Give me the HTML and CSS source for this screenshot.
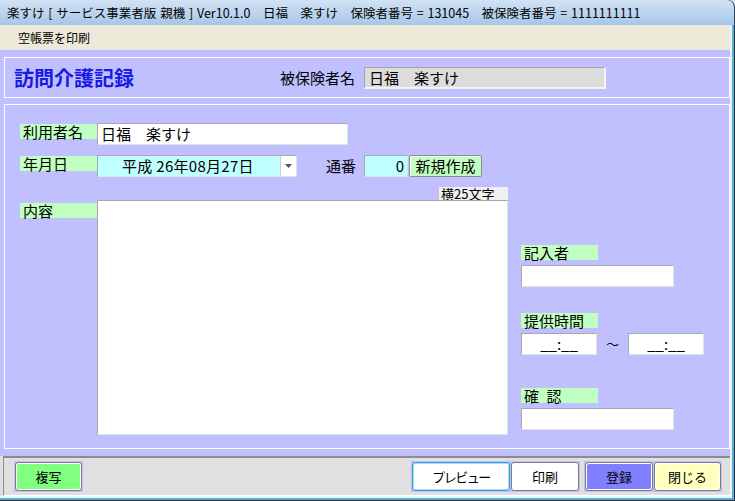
FILE: index.html
```html
<!DOCTYPE html>
<html lang="ja">
<head>
<meta charset="utf-8">
<title>訪問介護記録</title>
<link rel="stylesheet" href="styles.css">
</head>
<body>
<div class="titlebar">楽すけ [ サービス事業者版 親機 ] Ver10.1.0　日福　楽すけ　保険者番号 = 131045　被保険者番号 = 1111111111</div>
<div class="frame">
  <div class="menubar"><span class="menu-item">空帳票を印刷</span></div>
  <div class="main">
    <div class="panel header">
      <div class="page-title">訪問介護記録</div>
      <div class="hdr-label">被保険者名</div>
      <div class="hdr-field">日福　楽すけ</div>
    </div>
    <div class="panel form">
      <div class="col-left">
        <div class="row r1">
          <div class="lbl">利用者名</div>
          <div class="field name">日福　楽すけ</div>
        </div>
        <div class="row r2">
          <div class="lbl">年月日</div>
          <div class="date">
            <div class="date-text">平成 26年08月27日</div>
            <div class="dd"><svg width="7" height="4" viewBox="0 0 7 4"><path d="M0 0H7L3.5 4Z" fill="#4c5670"/></svg></div>
          </div>
          <div class="tsuban">通番</div>
          <div class="field serial">0</div>
          <div class="btn-new">新規作成</div>
        </div>
        <div class="row r3"><div class="hint">横25文字</div></div>
        <div class="row r4">
          <div class="lbl lbl-memo">内容</div>
          <div class="memo"></div>
        </div>
      </div>
      <div class="col-right">
        <div class="lbl rlbl">記入者</div>
        <div class="field rfield"></div>
        <div class="lbl rlbl gap-time">提供時間</div>
        <div class="time-row">
          <div class="field time">__:__</div>
          <div class="tilde">～</div>
          <div class="field time">__:__</div>
        </div>
        <div class="lbl rlbl gap-check">確&ensp;認</div>
        <div class="field rfield"></div>
      </div>
    </div>
  </div>
  <div class="footer">
    <div class="bgroup">
      <div class="btn btn-copy">複写</div>
    </div>
    <div class="right-buttons">
      <div class="bgroup">
        <div class="btn btn-preview">プレビュー</div>
        <div class="btn btn-print">印刷</div>
      </div>
      <div class="bgroup">
        <div class="btn btn-save">登録</div>
        <div class="btn btn-close">閉じる</div>
      </div>
    </div>
  </div>
</div>
</body>
</html>
```
FILE: styles.css
```css
* { box-sizing: border-box; }
html, body { margin: 0; padding: 0; }
body {
  width: 735px;
  height: 501px;
  overflow: hidden;
  font-family: "Noto Sans CJK JP", "DejaVu Sans", sans-serif;
  color: #000;
  background: #e0e0e0;
}
.titlebar {
  height: 25px;
  padding-left: 7px;
  font-size: 12.5px;
  line-height: 25px;
  white-space: nowrap;
  word-spacing: 1px;
  background: linear-gradient(#d2e2f4, #a8c6e8);
  border-top-right-radius: 7px;
  box-shadow: inset -1px 0 0 #33475c;
}
.frame {
  height: 476px;
  padding: 0 5px 5px 0;
  display: flex;
  flex-direction: column;
  background: #e0e0e0;
  box-shadow: inset -1px -1px 0 #22323f, inset -3px -3px 0 #55aee0, inset -5px -5px 0 #eaf4fb;
}
.menubar {
  height: 25px;
  background: #ece9d8;
  font-size: 12px;
  line-height: 25px;
  padding-left: 18px;
}
.main {
  height: 406px;
  background: #c0c0ff;
  padding: 7px 0 7px 4px;
}
.panel { border: 1px solid #fff; }
.header {
  height: 41px;
  display: flex;
  align-items: center;
  padding-left: 9px;
}
.page-title {
  width: 266px;
  font-size: 20px;
  font-weight: bold;
  color: #1a1ae6;
  line-height: 24px;
}
.hdr-label {
  width: 84px;
  font-size: 15px;
  line-height: 20px;
}
.hdr-field {
  width: 242px;
  height: 22px;
  background: #dcdcdc;
  border-style: solid;
  border-width: 1px 2px 2px 1px;
  border-color: #a4a4a4 #f4f4f4 #f4f4f4 #a4a4a4;
  font-size: 15px;
  line-height: 19px;
  padding-left: 4px;
}
.form {
  margin-top: 6px;
  height: 345px;
  display: flex;
  padding: 18px 0 0 15px;
}
.col-left {
  width: 488px;
  display: flex;
  flex-direction: column;
}
.row { display: flex; align-items: flex-start; }
.lbl {
  width: 77px;
  height: 15px;
  background: #c0ffc0;
  font-size: 15px;
  line-height: 15px;
  padding-left: 3px;
  margin-top: 1px;
  white-space: nowrap;
}
.field {
  height: 22px;
  background: #fff;
  border: 1px solid;
  border-color: #a8a8a8 #e2e2e2 #e2e2e2 #a8a8a8;
  font-size: 15px;
  line-height: 20px;
  padding-left: 3px;
  white-space: nowrap;
}
.name { width: 251px; }
.r2 { margin-top: 10px; }
.date {
  width: 200px;
  height: 22px;
  display: flex;
  border: 1px solid;
  border-color: #a8a8a8 #e2e2e2 #e2e2e2 #a8a8a8;
}
.date-text {
  flex: 1;
  background: #c0ffff;
  font-size: 15px;
  line-height: 20px;
  padding-left: 24px;
  white-space: nowrap;
  letter-spacing: 0.3px;
}
.dd {
  width: 16px;
  background: #fff;
  border-left: 1px solid #d0d0d0;
  display: flex;
  align-items: center;
  justify-content: center;
}
.tsuban {
  margin-left: 29px;
  width: 38px;
  font-size: 15px;
  line-height: 22px;
}
.serial {
  width: 44px;
  background: #c0ffff;
  text-align: right;
  padding: 0 3px 0 0;
}
.btn-new {
  width: 73px;
  height: 22px;
  margin-left: 1px;
  background: #c0ffc0;
  border: 1px solid #8c8c8c;
  border-radius: 2px;
  box-shadow: inset 1px 1px 0 #fff;
  font-size: 15px;
  line-height: 20px;
  text-align: center;
}
.r3 { margin-top: 10px; justify-content: flex-end; }
.hint {
  width: 69px;
  height: 13px;
  background: #f0f0f0;
  font-size: 13px;
  line-height: 13px;
  padding-left: 2px;
  white-space: nowrap;
}
.lbl-memo { margin-top: 3px; }
.memo {
  width: 411px;
  height: 235px;
  background: #fff;
  border: 1px solid;
  border-color: #a8a8a8 #e2e2e2 #e2e2e2 #a8a8a8;
}
.col-right {
  margin-left: 13px;
  padding-top: 122px;
  display: flex;
  flex-direction: column;
}
.rlbl { margin-top: 0; }
.rfield { width: 153px; margin-top: 5px; }
.gap-time { margin-top: 26px; }
.gap-check { margin-top: 33px; }
.time-row { display: flex; margin-top: 5px; }
.time { width: 76px; text-align: center; padding: 0; }
.tilde {
  width: 31px;
  text-align: center;
  font-size: 13px;
  line-height: 22px;
}
.footer {
  height: 40px;
  margin-left: 3px;
  border-top: 2px solid #8c8c8c;
  border-left: 1px solid #8c8c8c;
  border-bottom: 1px solid #fff;
  background: #e0e0e0;
  display: flex;
  justify-content: space-between;
  align-items: flex-start;
  padding: 3px 8px 0 10px;
}
.right-buttons { display: flex; gap: 4px; }
.bgroup {
  display: flex;
  gap: 1px;
  padding: 1px;
  background: #c0c0ff;
  height: 31px;
}
.btn {
  height: 29px;
  border: 1px solid #7c7c7c;
  border-radius: 3px;
  box-shadow: inset 1px 1px 0 #fff, inset -1px -1px 0 #fff;
  font-size: 13px;
  line-height: 27px;
  text-align: center;
  white-space: nowrap;
}
.btn-copy { width: 67px; background: #80ff80; }
.btn-preview {
  width: 98px;
  background: #fff;
  border-color: #2f9fd8;
  box-shadow: inset 1px 1px 0 #a8dcf2, inset -1px -1px 0 #a8dcf2;
  letter-spacing: -1.5px;
}
.btn-print { width: 68px; background: #fff; }
.btn-save { width: 68px; background: #8080ff; }
.btn-close { width: 67px; background: #ffffc0; }
```
